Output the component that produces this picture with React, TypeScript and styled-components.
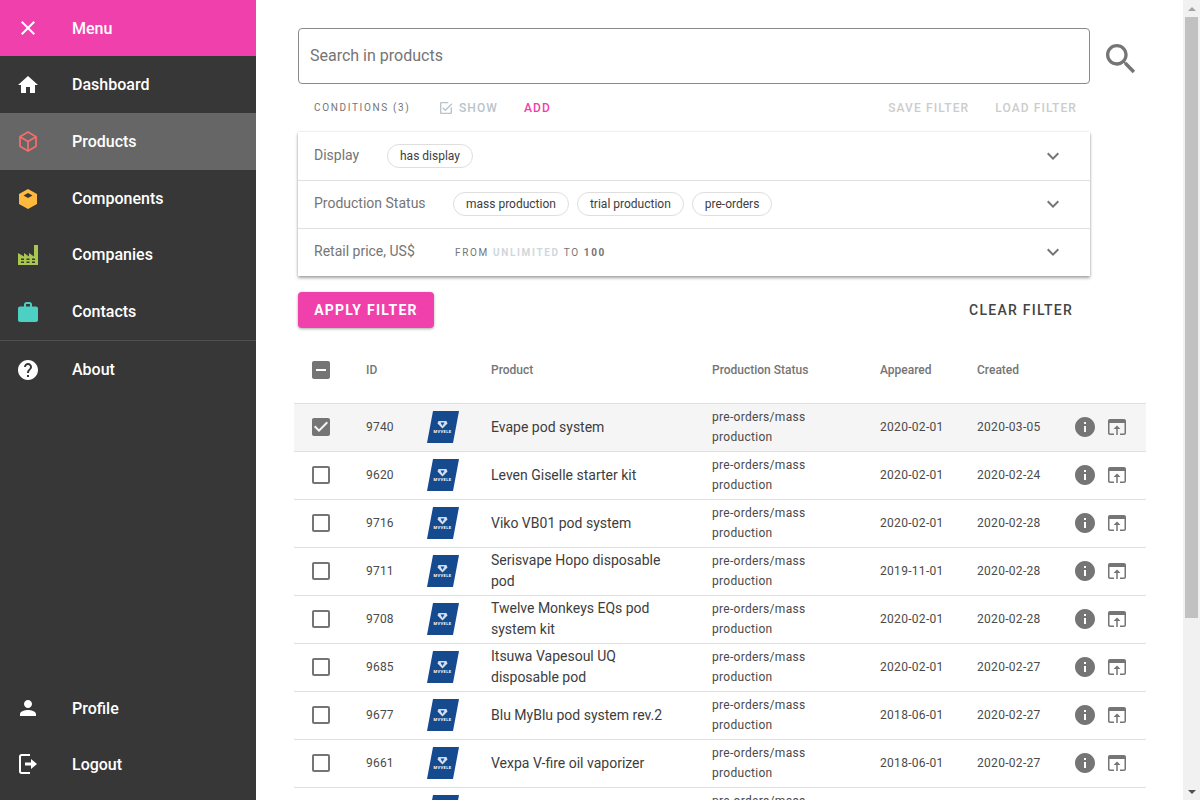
import React from "react"
import styled, { createGlobalStyle } from "styled-components"

const PINK = "#f040ab"
const GREY = "#757575"

const icons = {
  close: "M19 6.41L17.59 5 12 10.59 6.41 5 5 6.41 10.59 12 5 17.59 6.41 19 12 13.41 17.59 19 19 17.59 13.41 12z",
  home: "M10 20v-6h4v6h5v-8h3L12 3 2 12h3v8z",
  help: "M12 2C6.48 2 2 6.48 2 12s4.48 10 10 10 10-4.48 10-10S17.52 2 12 2zm1 17h-2v-2h2v2zm2.07-7.75l-.9.92C13.45 12.9 13 13.5 13 15h-2v-.5c0-1.1.45-2.1 1.17-2.83l1.24-1.26c.37-.36.59-.86.59-1.41 0-1.1-.9-2-2-2s-2 .9-2 2H8c0-2.21 1.79-4 4-4s4 1.79 4 4c0 .88-.36 1.68-.93 2.25z",
  person: "M12 12c2.21 0 4-1.79 4-4s-1.79-4-4-4-4 1.79-4 4 1.79 4 4 4zm0 2c-2.67 0-8 1.34-8 4v2h16v-2c0-2.66-5.33-4-8-4z",
  logout: "M3 4.5C3 3.1 4.1 2 5.5 2H14v2H5.5c-.3 0-.5.2-.5.5v15c0 .3.2.5.5.5H14v2H5.5C4.1 22 3 20.9 3 19.500zM15 7l6 5-6 5v-3.500H9v-3h6z",
  box: "M12 3l9 5v10l-9 5-9-5V8zm0 4l-4.500 2.500L12 12l4.500-2.500z",
  factory: "M18 2h4v20H2V10l6 3.500V10l5 3.500V10l5 3.500zM5 15.500V17h3v-1.500zm5.500 0V17h3v-1.500zm5.500 0V17h3v-1.500zM5 18.500V20h3v-1.500zm5.500 0V20h3v-1.500zm5.500 0V20h3v-1.500z",
  briefcase: "M8 6.500V4.500C8 3.100 9.100 2 10.500 2h3C14.900 2 16 3.100 16 4.500v2h4c1.100 0 2 .9 2 2v11.500c0 1.100-.9 2-2 2H4c-1.100 0-2-.9-2-2V8.500c0-1.100.9-2 2-2zm2 0h4v-2c0-.3-.2-.5-.5-.5h-3c-.3 0-.5.2-.5.5z",
  search: "M15.5 14h-.79l-.28-.27C15.41 12.59 16 11.11 16 9.5 16 5.91 13.09 3 9.5 3S3 5.91 3 9.5 5.91 16 9.5 16c1.61 0 3.09-.59 4.23-1.57l.27.28v.79l5 4.99L20.49 19l-4.99-5zm-6 0C7.01 14 5 11.99 5 9.5S7.01 5 9.5 5 14 7.01 14 9.5 11.99 14 9.5 14z",
  chevron: "M16.59 8.59L12 13.17 7.41 8.59 6 10l6 6 6-6z",
  show: "M19 19H5V5h10.500V3H5c-1.100 0-2 .9-2 2v14c0 1.100.9 2 2 2h14c1.100 0 2-.9 2-2v-8h-2zM7.800 10.800L6.400 12.200 11 16.800 21.500 6.300 20.100 4.900 11 14z",
  checked: "M19 3H5c-1.110 0-2 .9-2 2v14c0 1.100.89 2 2 2h14c1.110 0 2-.9 2-2V5c0-1.100-.89-2-2-2zm-9 14l-5-5 1.410-1.410L10 14.170l7.590-7.590L19 8l-9 9z",
  unchecked: "M19 5v14H5V5h14m0-2H5c-1.100 0-2 .9-2 2v14c0 1.100.9 2 2 2h14c1.100 0 2-.9 2-2V5c0-1.100-.9-2-2-2z",
  indeterminate: "M19 3H5c-1.100 0-2 .9-2 2v14c0 1.100.9 2 2 2h14c1.100 0 2-.9 2-2V5c0-1.100-.9-2-2-2zm-2 10H7v-2h10v2z",
  info: "M12 2C6.480 2 2 6.480 2 12s4.480 10 10 10 10-4.480 10-10S17.520 2 12 2zm1 15h-2v-6h2v6zm0-8h-2V7h2v2z",
  open: "M19 4H5c-1.110 0-2 .9-2 2v12c0 1.100.89 2 2 2h4v-1.500H5c-.3 0-.5-.2-.5-.5V8h15v10c0 .3-.2.5-.5.5h-4V20h4c1.100 0 2-.9 2-2V6c0-1.100-.89-2-2-2zm-7 6.500L8.500 14h2.750v6h1.500v-6h2.750z",
}

const GlobalStyle = createGlobalStyle`
  html, body {
    margin: 0;
    height: 100%;
    overflow: hidden;
    font-family: Roboto, "Liberation Sans", sans-serif;
  }
  * { box-sizing: border-box; }
`

const Layout = styled.div`
  display: flex;
  height: 100vh;
`

const Sidebar = styled.nav`
  width: 256px;
  flex-shrink: 0;
  display: flex;
  flex-direction: column;
  background: #373737;
  padding-bottom: 8px;
`

const MenuHeader = styled.div`
  height: 56px;
  flex-shrink: 0;
  display: flex;
  align-items: center;
  background: ${PINK};
  color: #fff;
  font-size: 16px;
  font-weight: 500;
`

const NavItem = styled.div<{ $active?: boolean; $short?: boolean }>`
  height: ${(p) => (p.$short ? "56px" : "56.8px")};
  padding-top: ${(p) => (p.$short ? "0" : "0.4px")};
  flex-shrink: 0;
  display: flex;
  align-items: center;
  background: ${(p) => (p.$active ? "#666666" : "transparent")};
  color: #fff;
  font-size: 16px;
  font-weight: 500;
`

const NavIconSlot = styled.span`
  width: 72px;
  padding-left: 16px;
  display: flex;
`

const NavDivider = styled.div`
  height: 1px;
  flex-shrink: 0;
  background: #505050;
`

const NavSpacer = styled.div`
  flex: 1;
`

const Main = styled.main`
  flex: 1;
  min-width: 0;
  height: 100vh;
  overflow: hidden;
  padding: 28px 37px 0 38px;
  background: #fff;
`

const ScrollTrack = styled.div`
  width: 17px;
  flex-shrink: 0;
  display: flex;
  flex-direction: column;
  align-items: center;
  background: #f1f1f1;
`

const ScrollArrow = styled.div<{ $down?: boolean }>`
  width: 17px;
  height: 17px;
  flex-shrink: 0;
  display: flex;
  align-items: center;
  justify-content: center;

  &::before {
    content: "";
    border-left: 4px solid transparent;
    border-right: 4px solid transparent;
    border-bottom: ${(p) => (p.$down ? "0" : "4px solid #a3a3a3")};
    border-top: ${(p) => (p.$down ? "4px solid #505050" : "0")};
  }
`

const ScrollThumb = styled.div`
  width: 13px;
  height: 601px;
  flex-shrink: 0;
  background: #c1c1c1;
`

const ScrollGap = styled.div`
  flex: 1;
`

const SearchRow = styled.div`
  display: flex;
  align-items: flex-start;
  margin-left: 4px;
  gap: 11px;
`

const SearchBox = styled.div`
  width: 792px;
  height: 56px;
  border: 1px solid #8a8a8a;
  border-radius: 4px;
  padding: 0 0 2px 11px;
  display: flex;
  align-items: center;
  color: ${GREY};
  font-size: 16px;
`

const SearchIconSlot = styled.span`
  margin-top: 11px;
`

const ConditionsBar = styled.div`
  width: 792px;
  height: 48px;
  margin-left: 4px;
  padding: 0 13px 1px 16px;
  display: flex;
  align-items: center;
`

const ConditionsLabel = styled.span`
  width: 124px;
  font-size: 10px;
  letter-spacing: 1.65px;
  color: ${GREY};
`

const BarAction = styled.span<{ $color: string; $gap?: number }>`
  display: inline-flex;
  align-items: center;
  gap: 5px;
  margin-right: ${(p) => p.$gap ?? 0}px;
  font-size: 12px;
  font-weight: 500;
  letter-spacing: 1.1px;
  color: ${(p) => p.$color};
`

const BarSpacer = styled.span`
  flex: 1;
`

const FilterPanel = styled.div`
  width: 792px;
  margin-left: 4px;
  box-shadow: 0 2px 3px rgba(0, 0, 0, 0.35), 0 0 2px rgba(0, 0, 0, 0.12);
`

const FilterRow = styled.div`
  height: 48px;
  display: flex;
  align-items: center;
  padding: 0 25px 0 16px;

  & + & {
    border-top: 1px solid #e0e0e0;
    padding-bottom: 1px;
  }
`

const FilterLabel = styled.span<{ $width: number }>`
  width: ${(p) => p.$width}px;
  padding-bottom: 2px;
  font-size: 14px;
  color: ${GREY};
`

const ChipList = styled.div`
  flex: 1;
  display: flex;
  gap: 8px;
`

const Chip = styled.span`
  height: 24px;
  padding: 0 12px;
  display: inline-flex;
  align-items: center;
  border: 1px solid #dedede;
  border-radius: 12px;
  font-size: 12px;
  color: #3d3d3d;
`

const PriceText = styled.span`
  flex: 1;
  font-size: 10px;
  letter-spacing: 1.65px;
  color: ${GREY};

  b { font-weight: 700; }
  b.muted { color: #cfd8dc; }
`

const ActionsRow = styled.div`
  width: 792px;
  margin: 16px 0 0 4px;
  display: flex;
  align-items: center;
  justify-content: space-between;
`

const ApplyButton = styled.button`
  width: 136px;
  height: 36px;
  border: 0;
  border-radius: 4px;
  background: ${PINK};
  color: #fff;
  font: 700 14px Roboto, sans-serif;
  letter-spacing: 1.25px;
  box-shadow: 0 1px 3px rgba(0, 0, 0, 0.35);
`

const ClearButton = styled.button`
  border: 0;
  background: none;
  padding: 0 17px 0 0;
  color: #444;
  font: 500 14px Roboto, sans-serif;
  letter-spacing: 1.25px;
`

const gridColumns = "72px 61px 64px 221px 168px 97px 98px 1fr"

const HeaderRow = styled.div`
  height: 76px;
  padding-top: 18px;
  display: grid;
  grid-template-columns: ${gridColumns};
  align-content: start;
  font-size: 12px;
  font-weight: 500;
  color: ${GREY};
  border-bottom: 1px solid #e0e0e0;
`

const HeaderCell = styled.span`
  height: 48px;
  display: flex;
  align-items: center;
`

const Row = styled.div<{ $selected?: boolean }>`
  height: 48px;
  padding-bottom: 1px;
  display: grid;
  grid-template-columns: ${gridColumns};
  align-items: center;
  background: ${(p) => (p.$selected ? "#f5f5f5" : "#fff")};
  border-bottom: 1px solid #e0e0e0;
`

const CheckCell = styled.div`
  padding-left: 15px;
  display: flex;
  align-items: center;
`

const IdCell = styled.div`
  font-size: 12px;
  letter-spacing: 0.2px;
  color: #4a4a4a;
`

const ProductCell = styled.div`
  font-size: 14px;
  line-height: 21px;
  color: #3d3d3d;
  padding-right: 40px;
`

const StatusCell = styled.div`
  font-size: 12px;
  line-height: 20px;
  letter-spacing: 0.3px;
  color: #4a4a4a;
  padding-right: 50px;
`

const DateCell = styled.div`
  font-size: 12px;
  letter-spacing: 0.3px;
  color: #4a4a4a;
`

const ActionCell = styled.div`
  display: flex;
  margin-left: -2px;
  gap: 8px;
`

const Glyph = styled.svg`
  display: block;
  flex-shrink: 0;
`

const Icon = ({ d, size = 24, color = GREY }: { d: string; size?: number; color?: string }) => (
  <Glyph width={size} height={size} viewBox="0 0 24 24" fill={color}>
    <path d={d} fillRule="evenodd" />
  </Glyph>
)

const CubeIcon = () => (
  <Glyph width="24" height="24" viewBox="0 0 24 24" fill="none" stroke="#ef6f6c" strokeWidth="1.8" strokeLinejoin="round">
    <path d="M12 3l8 4.700v9.600L12 22l-8-4.700V7.700z" />
    <path d="M4 7.700l8 4.800 8-4.800M12 12.500V22" />
  </Glyph>
)

const Logo = () => (
  <Glyph width="32" height="32" viewBox="0 0 32 32">
    <path d="M6 0h26l-6 32H0z" fill="#154a8f" />
    <path d="M11.500 10h8l1 2.500-5 5-5-5z" fill="#d5e0ee" />
    <path d="M13.500 11.500l2 3.500 2-3.500z" fill="#154a8f" />
    <text x="15.500" y="22" fontFamily="Roboto, sans-serif" fontSize="4" fontWeight="700" letterSpacing="0.4" fill="#fff" textAnchor="middle">MVVELE</text>
  </Glyph>
)

const rows = [
  { id: "9740", name: "Evape pod system", appeared: "2020-02-01", created: "2020-03-05", selected: true },
  { id: "9620", name: "Leven Giselle starter kit", appeared: "2020-02-01", created: "2020-02-24" },
  { id: "9716", name: "Viko VB01 pod system", appeared: "2020-02-01", created: "2020-02-28" },
  { id: "9711", name: "Serisvape Hopo disposable pod", appeared: "2019-11-01", created: "2020-02-28" },
  { id: "9708", name: "Twelve Monkeys EQs pod system kit", appeared: "2020-02-01", created: "2020-02-28" },
  { id: "9685", name: "Itsuwa Vapesoul UQ disposable pod", appeared: "2020-02-01", created: "2020-02-27" },
  { id: "9677", name: "Blu MyBlu pod system rev.2", appeared: "2018-06-01", created: "2020-02-27" },
  { id: "9661", name: "Vexpa V-fire oil vaporizer", appeared: "2018-06-01", created: "2020-02-27" },
  { id: "", name: "", appeared: "", created: "" },
]

const App = () => (
  <Layout>
    <GlobalStyle />
    <Sidebar>
      <MenuHeader>
        <NavIconSlot><Icon d={icons.close} color="#fff" /></NavIconSlot>
        Menu
      </MenuHeader>
      <NavItem><NavIconSlot><Icon d={icons.home} color="#fff" /></NavIconSlot>Dashboard</NavItem>
      <NavItem $active><NavIconSlot><CubeIcon /></NavIconSlot>Products</NavItem>
      <NavItem><NavIconSlot><Icon d={icons.box} color="#ffb93e" /></NavIconSlot>Components</NavItem>
      <NavItem><NavIconSlot><Icon d={icons.factory} color="#a9c750" /></NavIconSlot>Companies</NavItem>
      <NavItem><NavIconSlot><Icon d={icons.briefcase} color="#4dd0c4" /></NavIconSlot>Contacts</NavItem>
      <NavDivider />
      <NavItem><NavIconSlot><Icon d={icons.help} color="#fff" /></NavIconSlot>About</NavItem>
      <NavSpacer />
      <NavItem $short><NavIconSlot><Icon d={icons.person} color="#fff" /></NavIconSlot>Profile</NavItem>
      <NavItem $short><NavIconSlot><Icon d={icons.logout} color="#fff" /></NavIconSlot>Logout</NavItem>
    </Sidebar>
    <Main>
      <SearchRow>
        <SearchBox>Search in products</SearchBox>
        <SearchIconSlot><Icon d={icons.search} size={40} /></SearchIconSlot>
      </SearchRow>
      <ConditionsBar>
        <ConditionsLabel>CONDITIONS (3)</ConditionsLabel>
        <BarAction $color="#b8c4cc" $gap={26}><Icon d={icons.show} size={16} color="#b8c4cc" />SHOW</BarAction>
        <BarAction $color={PINK}>ADD</BarAction>
        <BarSpacer />
        <BarAction $color="#cccccc" $gap={26}>SAVE FILTER</BarAction>
        <BarAction $color="#cccccc">LOAD FILTER</BarAction>
      </ConditionsBar>
      <FilterPanel>
        <FilterRow>
          <FilterLabel $width={73}>Display</FilterLabel>
          <ChipList><Chip>has display</Chip></ChipList>
          <Icon d={icons.chevron} />
        </FilterRow>
        <FilterRow>
          <FilterLabel $width={139}>Production Status</FilterLabel>
          <ChipList>
            <Chip>mass production</Chip>
            <Chip>trial production</Chip>
            <Chip>pre-orders</Chip>
          </ChipList>
          <Icon d={icons.chevron} />
        </FilterRow>
        <FilterRow>
          <FilterLabel $width={141}>Retail price, US$</FilterLabel>
          <PriceText>FROM <b className="muted">UNLIMITED</b> TO <b>100</b></PriceText>
          <Icon d={icons.chevron} />
        </FilterRow>
      </FilterPanel>
      <ActionsRow>
        <ApplyButton>APPLY FILTER</ApplyButton>
        <ClearButton>CLEAR FILTER</ClearButton>
      </ActionsRow>
      <HeaderRow>
        <CheckCell><Icon d={icons.indeterminate} /></CheckCell>
        <HeaderCell>ID</HeaderCell>
        <HeaderCell />
        <HeaderCell>Product</HeaderCell>
        <HeaderCell>Production Status</HeaderCell>
        <HeaderCell>Appeared</HeaderCell>
        <HeaderCell>Created</HeaderCell>
      </HeaderRow>
      {rows.map((row, index) => (
        <Row key={index} $selected={row.selected}>
          <CheckCell><Icon d={row.selected ? icons.checked : icons.unchecked} /></CheckCell>
          <IdCell>{row.id}</IdCell>
          <Logo />
          <ProductCell>{row.name}</ProductCell>
          <StatusCell>pre-orders/mass production</StatusCell>
          <DateCell>{row.appeared}</DateCell>
          <DateCell>{row.created}</DateCell>
          <ActionCell>
            <Icon d={icons.info} />
            <Icon d={icons.open} />
          </ActionCell>
        </Row>
      ))}
    </Main>
    <ScrollTrack>
      <ScrollArrow />
      <ScrollThumb />
      <ScrollGap />
      <ScrollArrow $down />
    </ScrollTrack>
  </Layout>
)

export default App
